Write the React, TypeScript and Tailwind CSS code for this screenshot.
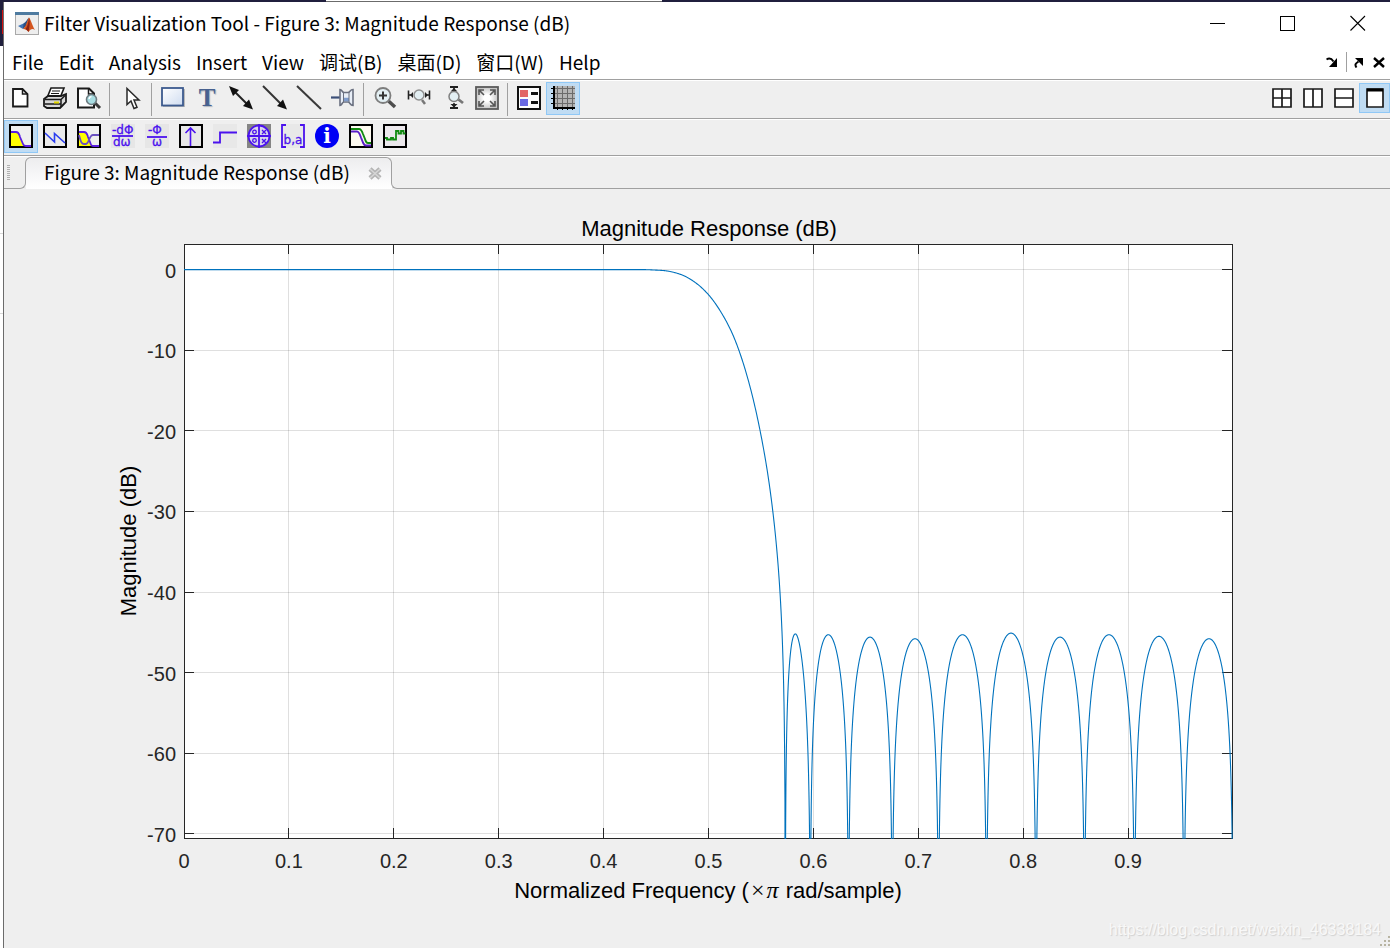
import type { ReactNode } from "react";

const UI_FONT = "font-['Noto_Sans_CJK_SC',sans-serif]";

const menus = ["File", "Edit", "Analysis", "Insert", "View", "调试(B)", "桌面(D)", "窗口(W)", "Help"];

const Icon = ({ children, crisp }: { children: ReactNode; crisp?: boolean }) => (
  <svg
    viewBox="0 0 24 24"
    className="w-6 h-6 shrink-0 overflow-visible"
    fill="none"
    shapeRendering={crisp ? "crispEdges" : undefined}
    aria-hidden="true"
  >
    {children}
  </svg>
);

const ToolButton = ({ label, active, children }: { label: string; active?: boolean; children: ReactNode }) => (
  <button
    type="button"
    aria-label={label}
    title={label}
    className={
      active
        ? "w-[34px] h-[33px] pb-px shrink-0 flex items-center justify-center border border-[#90c8f6] bg-[#c0dcf3]"
        : "w-[34px] h-[33px] pb-px shrink-0 flex items-center justify-center border border-transparent"
    }
  >
    {children}
  </button>
);

const Separator = () => <div className="w-px h-[33px] ml-[3px] mr-1 mt-px bg-[#a0a0a0]" />;

const MatlabLogo = () => (
  <svg viewBox="0 0 24 24" className="w-6 h-6 shrink-0" aria-hidden="true">
    <rect x="0.5" y="1.5" width="23" height="21" fill="#eeeeee" stroke="#a9a9a9" />
    <rect x="0" y="0" width="24" height="3" fill="#4f7ba0" />
    <path d="M3 14 L8.500 11.500 L11 13 L8 17 Z" fill="#3f74b5" />
    <path d="M8.500 11.500 C11 10.500 12 7 14 5.500 L11 14 L8 17 Z" fill="#2b4f83" />
    <path d="M14 5.500 C16 8 17 13 20 18 C17.500 16 15.500 17 13.500 20 C12.500 18.500 11 17 8 17 C11 15 12 9 14 5.500 Z" fill="#d4551f" />
    <path d="M14 5.500 C15 9 15 13 13.500 20 C12.500 18.500 11.500 17.500 10.500 17.200 C13 14 13.500 9 14 5.500 Z" fill="#8e2412" />
  </svg>
);

const NewIcon = () => (
  <Icon>
    <path d="M4 3h9.500l5 5v12.500H4z" fill="#fff" stroke="#1a1a1a" strokeWidth="1.800" />
    <path d="M13.500 3v5h5" stroke="#1a1a1a" strokeWidth="1.500" />
  </Icon>
);

const PrintIcon = () => (
  <Icon>
    <path d="M8 2h13l-4 10H4z" fill="#fff" stroke="#1a1a1a" strokeWidth="1.600" />
    <path d="M9 5h8M8 7.500h8M7 10h8" stroke="#1a1a1a" strokeWidth="1.200" />
    <path d="M1 13l4-3h13l5-2v8l-4 4-2 2H4l-3-2z" fill="#d8d8d8" stroke="#1a1a1a" strokeWidth="1.800" />
    <path d="M2 13.500h16l4-4M18 14v7M2 18h16" stroke="#1a1a1a" strokeWidth="1.500" />
    <path d="M11 16.500h5" stroke="#e3d800" strokeWidth="2" />
  </Icon>
);

const PreviewIcon = () => (
  <Icon>
    <path d="M1 2.500h11l5 5v14H1z" fill="#fff" stroke="#1a1a1a" strokeWidth="2" />
    <path d="M11.500 3v5h5" stroke="#1a1a1a" strokeWidth="1.500" />
    <path d="M18 17l5 5" stroke="#3a3a3a" strokeWidth="3" />
    <circle cx="14.500" cy="13.500" r="5" fill="#a8dde2" stroke="#6e7b80" strokeWidth="1.600" />
    <path d="M12 13a3 3 0 0 1 2.500-2.500" stroke="#fff" strokeWidth="1.500" />
  </Icon>
);

const PointerIcon = () => (
  <Icon>
    <path d="M8 2.500v16l4-3.500 3 7.500 3-1.200-3-7.300h5z" fill="#fff" stroke="#2a2a2a" strokeWidth="1.500" />
  </Icon>
);

const RectangleIcon = () => (
  <Icon>
    <defs>
      <linearGradient id="rectFill" x1="0" y1="0" x2="1" y2="1">
        <stop offset="0" stopColor="#ffffff" />
        <stop offset="1" stopColor="#cfdcf0" />
      </linearGradient>
    </defs>
    <rect x="2" y="3" width="22" height="18" fill="#b9b9b9" />
    <rect x="1" y="2" width="21" height="17.500" fill="url(#rectFill)" stroke="#3c5a8e" strokeWidth="1.800" />
  </Icon>
);

const TextIcon = () => (
  <Icon>
    <text
      x="12"
      y="20"
      textAnchor="middle"
      fill="#47618f"
      className="font-['Liberation_Serif',serif] text-[25px] font-bold [text-shadow:1px_1px_1px_#b0b4bc]"
    >
      T
    </text>
  </Icon>
);

const DoubleArrowIcon = () => (
  <Icon>
    <path d="M3 3l18 18" stroke="#222" strokeWidth="2" />
    <path d="M0 0l10 4-6 6zM24 23.500l-10-3.500 6-6.500z" fill="#111" />
  </Icon>
);

const ArrowIcon = () => (
  <Icon>
    <path d="M0 0l21 21" stroke="#333" strokeWidth="2" />
    <path d="M24 23.500l-10-3.500 6-6.500z" fill="#111" />
  </Icon>
);

const LineIcon = () => (
  <Icon>
    <path d="M0 0l24 23" stroke="#3a3a3a" strokeWidth="2" />
  </Icon>
);

const PinIcon = () => (
  <Icon>
    <path d="M0 11.500h9" stroke="#3c4f78" strokeWidth="2.200" />
    <path d="M9 3.500c2 0 2 3 4 3h4c2 0 2-3 5-3v16c-3 0-3-3.500-5-3.500h-4c-2 0-2 3.500-4 3.500z" fill="#e8eef7" stroke="#6a7080" strokeWidth="1.600" />
    <path d="M13 13.500h5" stroke="#7f9ccc" strokeWidth="3.500" />
    <path d="M12.500 6v10.500M18 6v10.500" stroke="#6a7080" />
  </Icon>
);

const ZoomInIcon = () => (
  <Icon>
    <path d="M15.500 15l6.500 6" stroke="#4d4d4d" strokeWidth="3.500" />
    <circle cx="10" cy="9.500" r="7.500" fill="#e3eff3" stroke="#7d7d7d" strokeWidth="1.800" />
    <path d="M10 5.500v8M6 9.500h8" stroke="#333" strokeWidth="2" />
  </Icon>
);

const ZoomXIcon = () => (
  <Icon>
    <path d="M1.500 4.500v9M22.500 4.500v9" stroke="#222" strokeWidth="1.600" />
    <path d="M2 9h4M18 9h4" stroke="#222" strokeWidth="1.600" />
    <path d="M6 6v6L3 9zM18 6v6l3-3z" fill="#222" />
    <path d="M15 14l3 4" stroke="#777" strokeWidth="2.500" />
    <circle cx="12" cy="9" r="5" fill="#e3eff3" stroke="#909090" strokeWidth="1.500" />
  </Icon>
);

const ZoomYIcon = () => (
  <Icon>
    <path d="M9 1h8M9 22h8" stroke="#222" strokeWidth="1.800" />
    <path d="M13 1v4M13 17v5" stroke="#222" strokeWidth="1.600" />
    <path d="M9.500 5.500h7l-3.500-3.500zM9.500 18h7l-3.500 3.500z" fill="#222" />
    <path d="M17.500 13.500l4.500 3.500" stroke="#777" strokeWidth="2.800" />
    <circle cx="13" cy="10.500" r="5" fill="#e3eff3" stroke="#808080" strokeWidth="1.500" />
  </Icon>
);

const FitIcon = () => (
  <Icon>
    <defs>
      <radialGradient id="fitFill">
        <stop offset="0.300" stopColor="#ffffff" />
        <stop offset="1" stopColor="#c4c4c4" />
      </radialGradient>
    </defs>
    <rect x="1" y="1" width="22" height="22" fill="url(#fitFill)" stroke="#5a5a5a" strokeWidth="1.800" />
    <path
      d="M4 9V4h5M4 4l5 5M15 4h5v5M20 4l-5 5M4 15v5h5M4 20l5-5M20 15v5h-5M20 20l-5-5"
      stroke="#555"
      strokeWidth="1.600"
    />
  </Icon>
);

const LegendIcon = () => (
  <Icon crisp>
    <rect x="1" y="1" width="22" height="22" fill="#fbfbfb" stroke="#111" strokeWidth="2" />
    <rect x="3" y="4" width="8" height="7" fill="#e26565" />
    <rect x="3" y="13" width="8" height="7" fill="#6868e2" />
    <path d="M14 7.500h7M14 16.500h7" stroke="#111" strokeWidth="3" />
  </Icon>
);

const GridIcon = () => (
  <Icon crisp>
    <rect x="2" y="0" width="22" height="22" fill="#b4b4b4" />
    <path
      d="M6.500 0v22M11.500 0v22M16.500 0v22M21.500 0v22M2 2.500h22M2 7.500h22M2 12.500h22M2 17.500h22"
      stroke="#6b6b6b"
    />
    <path d="M3 0v23M2 22h22" stroke="#000" strokeWidth="2" />
    <path d="M0 2.500h3M0 7.500h3M0 12.500h3M0 17.500h3M6.500 21v3M11.500 21v3M16.500 21v3M21.500 21v3" stroke="#000" />
  </Icon>
);

const MagnitudeIcon = () => (
  <Icon>
    <rect x="1" y="1" width="22" height="22" fill="#efefef" stroke="#000" strokeWidth="2" />
    <path d="M2 8h7l5 13.500V22H2z" fill="#ffff00" />
    <path d="M2 8h5c3 0 3 2 4 5l3 7c.500 1.500 1 2 3 2h5" stroke="#5a1ee0" strokeWidth="1.800" />
  </Icon>
);

const PhaseIcon = () => (
  <Icon>
    <rect x="1" y="1" width="22" height="22" fill="#eaeaea" stroke="#000" strokeWidth="2" />
    <path d="M2 9l9.500 9V9.500L22 19" stroke="#2a3df0" strokeWidth="1.600" />
  </Icon>
);

const MagPhaseIcon = () => (
  <Icon>
    <rect x="1" y="1" width="22" height="22" fill="#efefef" stroke="#000" strokeWidth="2" />
    <path d="M2 8h7l5 13.500V22H2z" fill="#ffff00" />
    <path d="M2 8h5c3 0 3 2 4 5l2 5c1 3 1 4 4 4h5" stroke="#5a1ee0" strokeWidth="1.800" />
    <path d="M2 11c2 8 3 9 5 9h2c3 0 3-9 7-9h6" stroke="#6a50c0" strokeWidth="1.800" />
  </Icon>
);

const GroupDelayIcon = () => (
  <Icon>
    <rect width="24" height="24" fill="#e6e6e6" />
    <text x="1" y="10" fill="#4b12ee" stroke="#4b12ee" strokeWidth="0.300" className="font-['DejaVu_Sans',sans-serif] text-[12px]">
      -dΦ
    </text>
    <path d="M1 12h21" stroke="#4b12ee" strokeWidth="1.800" />
    <text x="2" y="22" fill="#4b12ee" stroke="#4b12ee" strokeWidth="0.300" className="font-['DejaVu_Sans',sans-serif] text-[12px]">
      dω
    </text>
  </Icon>
);

const PhaseDelayIcon = () => (
  <Icon>
    <rect width="24" height="24" fill="#e6e6e6" />
    <text x="3" y="10" fill="#4b12ee" stroke="#4b12ee" strokeWidth="0.300" className="font-['DejaVu_Sans',sans-serif] text-[12px]">
      -Φ
    </text>
    <path d="M2 13h20" stroke="#4b12ee" strokeWidth="1.800" />
    <text x="7" y="22" fill="#4b12ee" stroke="#4b12ee" strokeWidth="0.300" className="font-['DejaVu_Sans',sans-serif] text-[12px]">
      ω
    </text>
  </Icon>
);

const ImpulseIcon = () => (
  <Icon>
    <rect x="1" y="1" width="22" height="22" fill="#e8e8e8" stroke="#000" strokeWidth="2" />
    <path d="M11.500 22V4M6.500 9l5-5 5 5" stroke="#4b12ee" strokeWidth="1.600" />
  </Icon>
);

const StepIcon = () => (
  <Icon>
    <rect width="24" height="24" fill="#e8e8e8" />
    <path d="M0 18.500h7V8.500h17" stroke="#4b12ee" strokeWidth="1.800" />
  </Icon>
);

const PoleZeroIcon = () => (
  <Icon>
    <rect width="24" height="24" fill="#858585" />
    <circle cx="12" cy="12" r="10.500" fill="#d9d6ea" stroke="#4b12ee" strokeWidth="1.800" />
    <path d="M12 0v24M0 12h24" stroke="#4b12ee" strokeWidth="1.800" />
    <path d="M15 6l4 4M19 6l-4 4M15 15l4 4M19 15l-4 4" stroke="#4b12ee" strokeWidth="1.300" />
    <circle cx="7.500" cy="8" r="1.800" stroke="#4b12ee" strokeWidth="1.300" />
    <circle cx="7.500" cy="16.500" r="1.800" stroke="#4b12ee" strokeWidth="1.300" />
  </Icon>
);

const CoefficientsIcon = () => (
  <Icon>
    <rect width="24" height="24" fill="#e8e8e8" />
    <path d="M5 1H1v22h4M19 1h4v22h-4" stroke="#4b12ee" strokeWidth="1.800" />
    <text x="12" y="20" textAnchor="middle" fill="#4b12ee" stroke="#4b12ee" strokeWidth="0.300" className="font-['DejaVu_Sans',sans-serif] text-[12px]">
      b,a
    </text>
  </Icon>
);

const InfoIcon = () => (
  <Icon>
    <circle cx="12" cy="12" r="12" fill="#0000f5" />
    <text x="12" y="19" textAnchor="middle" fill="#fff" className="font-['DejaVu_Serif',serif] text-[20px] font-bold">
      i
    </text>
  </Icon>
);

const MaskIcon = () => (
  <Icon>
    <rect x="1" y="1" width="22" height="22" fill="#fdfaf0" stroke="#000" strokeWidth="2" />
    <path d="M2 7.500h6c2 0 3 3 4 6l2 5c1 2 1 3 3 3h5" stroke="#5a1ec8" strokeWidth="1.900" />
    <path d="M2 5h8c2 0 3 2 4 5l2 5c1 3 1 4 3 4h3" stroke="#118a11" strokeWidth="1.900" />
  </Icon>
);

const NoiseIcon = () => (
  <Icon>
    <rect x="1" y="1" width="22" height="22" fill="#ebe8ec" stroke="#000" strokeWidth="2" />
    <path d="M2 14h2v1.500h4V14h2v1.500h3V7h2.500v2.500h2.500V7h2.500v2.500h2" stroke="#118a11" strokeWidth="1.800" />
  </Icon>
);

const layouts = [
  { label: "Tile", path: "M2 2h18v18H2zM11 2v18M2 11h18" },
  { label: "Left/Right Tile", path: "M2 2h18v18H2zM11 2v18" },
  { label: "Top/Bottom Tile", path: "M2 2h18v18H2zM2 11h18" },
  { label: "Maximize", path: "M3 2h16v18H3zM3 3h16" },
];

// Plot geometry, in figure units
const FIG_W = 1386;
const FIG_H = 759;
const LEFT = 180;
const RIGHT = 1228;
const TOP = 55;
const BOTTOM = 649;

const xAt = (f: number) => LEFT + f * 1049;
const yAt = (db: number) => 80.6 - db * 8.06;

const xTicks = [0, 0.1, 0.2, 0.3, 0.4, 0.5, 0.6, 0.7, 0.8, 0.9];
const yTicks = [0, -10, -20, -30, -40, -50, -60, -70];

// The transition band is a straight ramp into the first null plus this correction:
// distance left of the null, and dB to add
const FIRST_NULL = 781.3;
const correction = [
  [151.3, 0],
  [132, 1.14],
  [115, 2.14],
  [98, 2.8],
  [80, 2.85],
  [65, 2.2],
  [50, 0.8],
  [35, -1.95],
  [20, -5.9],
  [10, -9.2],
  [0, -13],
];

// Stopband lobes: start null, end null, peak x, peak level in dB
const lobes = [
  [781.3, 806.3, 791.3, -45.2],
  [806.3, 844.5, 824.3, -45.3],
  [844.5, 888.3, 866, -45.6],
  [888.3, 934.5, 911, -45.8],
  [934.5, 982.5, 958.5, -45.3],
  [982.5, 1032, 1007, -45.1],
  [1032, 1080.5, 1056, -45.6],
  [1080.5, 1130.5, 1105, -45.3],
  [1130.5, 1180, 1155, -45.5],
  [1180, 1229, 1205, -45.8],
];

const toDb = (gain: number) => (gain > 0.00001 ? 20 * Math.log10(gain) : -100);

const slopeAt = (i: number) => {
  const a = correction[Math.max(i - 1, 0)];
  const b = correction[Math.min(i + 1, correction.length - 1)];
  return (b[1] - a[1]) / (b[0] - a[0]);
};

const responsePath = () => {
  const points: string[] = [`${LEFT},${yAt(0)}`];
  for (let i = 0; i < correction.length - 1; i++) {
    const [d0, c0] = correction[i];
    const [d1, c1] = correction[i + 1];
    const h = d1 - d0;
    for (let s = 0; s < 30; s++) {
      const t = s / 30;
      const d = d0 + t * h;
      const extra =
        (2 * t ** 3 - 3 * t ** 2 + 1) * c0 +
        (t ** 3 - 2 * t ** 2 + t) * h * slopeAt(i) +
        (-2 * t ** 3 + 3 * t ** 2) * c1 +
        (t ** 3 - t ** 2) * h * slopeAt(i + 1);
      const db = Math.min(0, toDb(d / 151.3) + extra);
      points.push(`${(FIRST_NULL - d).toFixed(2)},${yAt(db).toFixed(2)}`);
    }
  }
  for (const [start, end, peak, level] of lobes) {
    const p = (peak - start) / (end - start);
    const skew = (0.5 - p) / (p * (1 - p));
    for (let s = 0; s <= 200; s++) {
      const t = s / 200;
      const u = t + skew * t * (1 - t);
      const x = start + t * (end - start);
      points.push(`${x.toFixed(2)},${yAt(level + toDb(Math.sin(Math.PI * u))).toFixed(2)}`);
    }
  }
  return `M${points.join("L")}`;
};

const snap = (v: number) => Math.floor(v) + 0.5;

const ResponseChart = () => (
  <svg
    viewBox={`0 0 ${FIG_W} ${FIG_H}`}
    className="block w-full h-auto font-['Liberation_Sans',sans-serif]"
    role="img"
    aria-label="Magnitude Response (dB)"
  >
    <defs>
      <clipPath id="plotArea">
        <rect x={LEFT} y={TOP} width={RIGHT - LEFT + 1} height={BOTTOM - TOP + 1} />
      </clipPath>
    </defs>
    <rect x={LEFT} y={TOP} width={RIGHT - LEFT} height={BOTTOM - TOP} fill="#fff" />
    <g stroke="#262626" strokeOpacity="0.15">
      {xTicks.slice(1).map((f) => (
        <path key={f} d={`M${snap(xAt(f))} ${TOP}V${BOTTOM}`} />
      ))}
      {yTicks.map((db) => (
        <path key={db} d={`M${LEFT} ${snap(yAt(db))}H${RIGHT}`} />
      ))}
    </g>
    {xTicks.map((f) => (
      <g key={f}>
        <path d={`M${snap(xAt(f))} ${TOP}v10M${snap(xAt(f))} ${BOTTOM}v-10`} stroke="#262626" />
        <text x={xAt(f)} y="679" textAnchor="middle" fill="#262626" className="text-[20px]">
          {f}
        </text>
      </g>
    ))}
    {yTicks.map((db) => (
      <g key={db}>
        <path d={`M${LEFT} ${snap(yAt(db))}h10M${RIGHT} ${snap(yAt(db))}h-10`} stroke="#262626" />
        <text x="172" y={Math.round(yAt(db)) + 8} textAnchor="end" fill="#262626" className="text-[20px]">
          {db}
        </text>
      </g>
    ))}
    <rect x={LEFT + 0.5} y={TOP + 0.5} width={RIGHT - LEFT} height={BOTTOM - TOP} fill="none" stroke="#262626" />
    <path d={responsePath()} fill="none" stroke="#0072bd" strokeWidth="1.100" clipPath="url(#plotArea)" />
    <text x="705" y="47" textAnchor="middle" fill="#000" className="text-[22px]">
      Magnitude Response (dB)
    </text>
    <text x="704" y="709" textAnchor="middle" fill="#000" className="text-[22px]">
      Normalized Frequency (
      <tspan dx="2" className="font-['Liberation_Serif',serif] text-[24px]">×</tspan>
      <tspan dx="2" className="font-['Liberation_Serif',serif] text-[24px] italic">π</tspan>
      <tspan dx="1"> rad/sample)</tspan>
    </text>
    <text transform="translate(132 352) rotate(-90)" textAnchor="middle" fill="#000" className="text-[22px]">
      Magnitude (dB)
    </text>
  </svg>
);

const App = () => {
  return (
    <div className="min-h-screen flex flex-col bg-[#efefef]">
      <div className="h-[2px] flex">
        <div className="w-[326px] bg-[#201f3d]" />
        <div className="w-[336px] bg-white border-b border-[#6b6b6b]" />
        <div className="flex-1 bg-[#201f3d]" />
      </div>
      <div className="flex-1 flex">
        <div className="w-[3px] shrink-0 flex flex-col bg-white">
          <div className="h-[44px] pt-2 bg-[#201f3d]">
            <div className="h-6 ml-[2px] bg-[#d01010]" />
          </div>
          <div className="h-[188px] border-b border-[#d8d8d8]" />
          <div className="h-[80px] border-b border-[#d8d8d8]" />
        </div>

        <div className="flex-1 min-w-0 flex flex-col border-l border-[#6b6b6b]">
          <header className={`${UI_FONT} h-[43px] flex items-center pl-[11px] pr-6 bg-white`}>
            <MatlabLogo />
            <h1 className="flex-1 pl-[5px] pb-0.5 text-[19px] leading-6 text-black whitespace-nowrap">
              Filter Visualization Tool - Figure 3: Magnitude Response (dB)
            </h1>
            <div className="flex gap-[54px] pb-0.5">
              <button type="button" aria-label="Minimize" className="w-4 h-4">
                <svg viewBox="0 0 16 16" className="w-4 h-4" shapeRendering="crispEdges">
                  <path d="M0 8.500h15" stroke="#000" />
                </svg>
              </button>
              <button type="button" aria-label="Maximize" className="w-4 h-4">
                <svg viewBox="0 0 16 16" className="w-4 h-4" shapeRendering="crispEdges">
                  <path d="M0.500 1.500h14v14h-14z" fill="none" stroke="#000" />
                </svg>
              </button>
              <button type="button" aria-label="Close" className="w-4 h-4">
                <svg viewBox="0 0 16 16" className="w-4 h-4">
                  <path d="M0.500 1l14.500 14.500M15 1l-14.500 14.500" stroke="#000" strokeWidth="1.100" />
                </svg>
              </button>
            </div>
          </header>

          <nav className={`${UI_FONT} h-[34px] flex items-center justify-between pl-2 pr-[5px] bg-white`}>
            <div className="flex gap-[15px]">
              {menus.map((menu) => (
                <button key={menu} type="button" className="text-[19px] leading-6 text-black whitespace-nowrap">
                  {menu}
                </button>
              ))}
            </div>
            <div className="flex items-center">
              <button type="button" aria-label="Dock" className="mr-2">
                <svg viewBox="0 0 12 12" className="w-3 h-3">
                  <path d="M0.500 3.500c3-2 5-1 7 2" fill="none" stroke="#000" strokeWidth="2" />
                  <path d="M11 2v9H3z" fill="#000" />
                </svg>
              </button>
              <div className="w-px h-5 bg-[#a0a0a0]" />
              <button type="button" aria-label="Undock" className="ml-1.5">
                <svg viewBox="0 0 12 12" className="w-3 h-3">
                  <path d="M3.500 11.500c-2-3-1-4 2-6" fill="none" stroke="#000" strokeWidth="2" />
                  <path d="M2 2h8v8z" fill="#000" />
                </svg>
              </button>
              <button type="button" aria-label="Close document" className="ml-2">
                <svg viewBox="0 0 12 12" className="w-3 h-3">
                  <path d="M1 2l10 9M11 2l-10 9" stroke="#000" strokeWidth="2.400" />
                </svg>
              </button>
            </div>
          </nav>

          <div className="h-[39px] flex justify-between pt-[2px] border-t border-[#a0a0a0] shadow-[inset_0_1px_0_#fff]">
            <div className="flex">
              <ToolButton label="New Figure"><NewIcon /></ToolButton>
              <ToolButton label="Print"><PrintIcon /></ToolButton>
              <ToolButton label="Print Preview"><PreviewIcon /></ToolButton>
              <Separator />
              <ToolButton label="Edit Plot"><PointerIcon /></ToolButton>
              <Separator />
              <ToolButton label="Insert Rectangle"><RectangleIcon /></ToolButton>
              <ToolButton label="Insert Text"><TextIcon /></ToolButton>
              <ToolButton label="Insert Double Arrow"><DoubleArrowIcon /></ToolButton>
              <ToolButton label="Insert Arrow"><ArrowIcon /></ToolButton>
              <ToolButton label="Insert Line"><LineIcon /></ToolButton>
              <ToolButton label="Pin to Axes"><PinIcon /></ToolButton>
              <Separator />
              <ToolButton label="Zoom In"><ZoomInIcon /></ToolButton>
              <ToolButton label="Zoom X-Axis"><ZoomXIcon /></ToolButton>
              <ToolButton label="Zoom Y-Axis"><ZoomYIcon /></ToolButton>
              <ToolButton label="Restore Default View"><FitIcon /></ToolButton>
              <Separator />
              <ToolButton label="Turn Legend On"><LegendIcon /></ToolButton>
              <ToolButton label="Turn Grid Off" active><GridIcon /></ToolButton>
            </div>
            <div className="flex pt-px">
              {layouts.map(({ label, path }) => (
                <button
                  key={label}
                  type="button"
                  aria-label={label}
                  className={
                    label === "Maximize"
                      ? "w-[31px] h-[30px] flex items-center justify-center border border-[#90c8f6] bg-[#c0dcf3]"
                      : "w-[31px] h-[30px] flex items-center justify-center border border-transparent"
                  }
                >
                  <svg viewBox="0 0 22 22" className="w-[22px] h-[22px]">
                    <path d={path} fill="#fff" stroke="#1a1a1a" strokeWidth="1.700" />
                    {label === "Maximize" && <path d="M3 3h16" stroke="#000" strokeWidth="3" />}
                  </svg>
                </button>
              ))}
            </div>
          </div>

          <div className="h-[37px] flex pt-px border-t border-[#a0a0a0] shadow-[inset_0_1px_0_#fff]">
            <ToolButton label="Magnitude Response" active><MagnitudeIcon /></ToolButton>
            <ToolButton label="Phase Response"><PhaseIcon /></ToolButton>
            <ToolButton label="Magnitude and Phase Responses"><MagPhaseIcon /></ToolButton>
            <ToolButton label="Group Delay Response"><GroupDelayIcon /></ToolButton>
            <ToolButton label="Phase Delay"><PhaseDelayIcon /></ToolButton>
            <ToolButton label="Impulse Response"><ImpulseIcon /></ToolButton>
            <ToolButton label="Step Response"><StepIcon /></ToolButton>
            <ToolButton label="Pole-Zero Plot"><PoleZeroIcon /></ToolButton>
            <ToolButton label="Filter Coefficients"><CoefficientsIcon /></ToolButton>
            <ToolButton label="Filter Information"><InfoIcon /></ToolButton>
            <ToolButton label="Magnitude Response Estimate"><MaskIcon /></ToolButton>
            <ToolButton label="Round-off Noise Power Spectrum"><NoiseIcon /></ToolButton>
          </div>

          <div className="h-[34px] flex items-end pt-px border-t border-[#a0a0a0] shadow-[inset_0_1px_0_#fff]">
            <div className="w-[22px] h-full flex items-end justify-end">
              <div className="flex-1 h-full flex items-center pl-[3px] border-b border-[#a0a0a0]">
                <div className="w-[3px] h-4 bg-[repeating-linear-gradient(#b0b0b0_0_1px,transparent_1px_2px)]" />
              </div>
              <div className="w-2 h-4 border-b border-r border-[#a0a0a0] rounded-br-[6px]" />
            </div>
            <div
              className={`${UI_FONT} relative h-full flex items-center pl-[18px] pr-2 pb-0.5 bg-linear-to-b from-[#ececee] to-white rounded-t-[6px] before:absolute before:-left-px before:right-0 before:top-0 before:h-4 before:rounded-t-[6px] before:border before:border-b-0 before:border-[#a0a0a0]`}
            >
              <span className="text-[19px] leading-6 text-black whitespace-nowrap">Figure 3: Magnitude Response (dB)</span>
              <button type="button" aria-label="Close tab" className="ml-4 pt-0.5">
                <svg viewBox="0 0 18 18" className="w-[18px] h-[18px]">
                  <path d="M4 5l10 9M14 5l-10 9" stroke="#b4b4b4" strokeWidth="4.500" />
                  <path d="M4 5l10 9M14 5l-10 9" stroke="#d6d6d6" strokeWidth="1.500" />
                </svg>
              </button>
            </div>
            <div className="relative w-2 h-4 -ml-px border-b border-l border-[#a0a0a0] rounded-bl-[6px]" />
            <div className="flex-1 border-b border-[#a0a0a0]" />
          </div>

          <main className="relative flex-1">
            <ResponseChart />
            <p className="absolute right-[9px] bottom-2 font-['Liberation_Sans',sans-serif] text-[16px] leading-5 text-[#f8f8f8] [text-shadow:1px_1px_1px_#d0d0d0]">
              https://blog.csdn.net/weixin_46338184
            </p>
            <svg viewBox="0 0 12 12" className="absolute right-0 bottom-0 w-3 h-3" shapeRendering="crispEdges">
              <path d="M2 8h2v2H2zM6 8h2v2H6zM10 8h2v2h-2zM6 4h2v2H6zM10 4h2v2h-2zM10 0h2v2h-2z" fill="#b8b4a2" />
            </svg>
          </main>
        </div>
      </div>
    </div>
  );
};

export default App;
